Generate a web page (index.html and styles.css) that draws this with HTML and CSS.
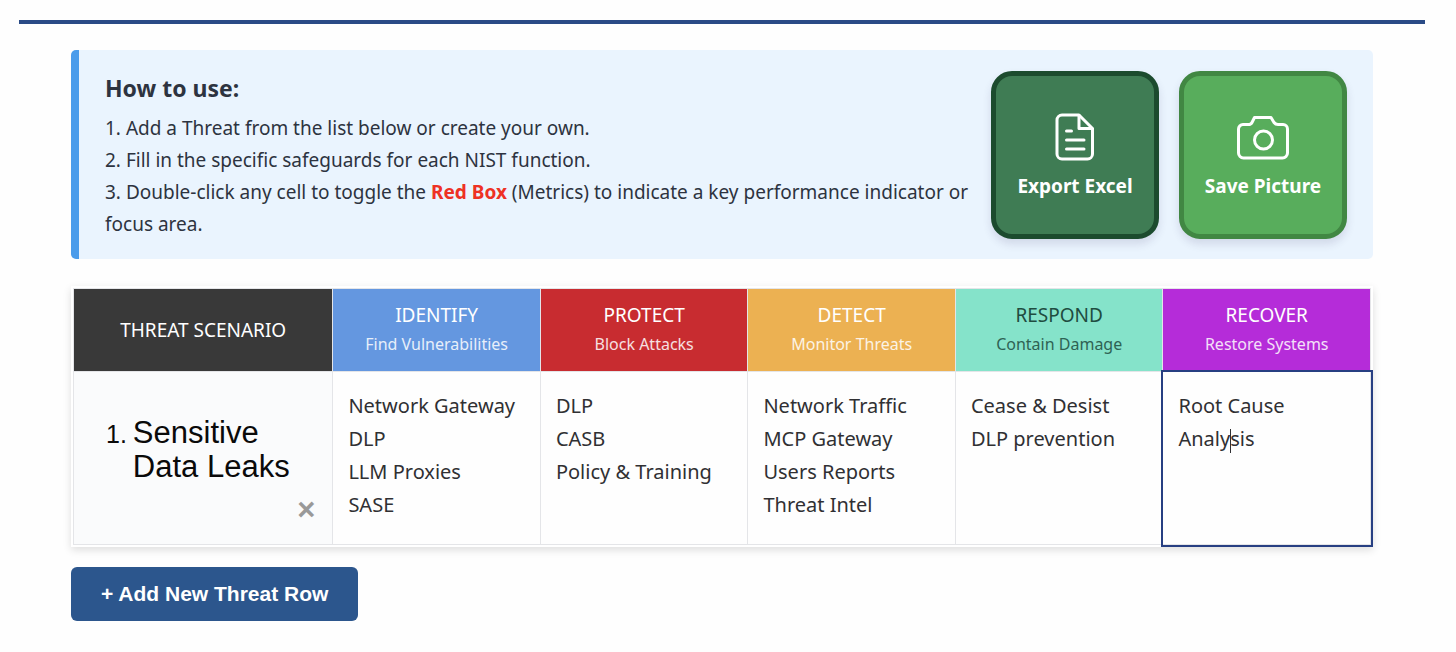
FILE: index.html
```html
<!DOCTYPE html>
<html lang="en">
<head>
<meta charset="utf-8">
<meta name="viewport" content="width=device-width, initial-scale=1">
<title>Threat Matrix</title>
<link rel="stylesheet" href="styles.css">
</head>
<body>
<header class="page-rule"></header>
<main class="content">
  <section class="guide">
    <div class="guide-text">
      <h2 class="guide-title">How to use:</h2>
      <p>1. Add a Threat from the list below or create your own.</p>
      <p>2. Fill in the specific safeguards for each NIST function.</p>
      <p>3. Double-click any cell to toggle the <strong class="red">Red Box</strong> (Metrics) to indicate a key performance indicator or focus area.</p>
    </div>
    <div class="actions">
      <button type="button" class="tile tile-excel">
        <svg class="icon" viewBox="0 0 52 52" aria-hidden="true">
          <path d="M13 4H30L43.500 17.500V43a5 5 0 0 1-5 5H13a5 5 0 0 1-5-5V9a5 5 0 0 1 5-5z"/>
          <path d="M30 4.500V17.500H43M17.500 20h5M17.500 29h17.500M17.500 38h17.500"/>
        </svg>
        <span>Export Excel</span>
      </button>
      <button type="button" class="tile tile-picture">
        <svg class="icon" viewBox="0 0 52 52" aria-hidden="true">
          <path d="M6 13.500H11.500Q14 13.500 15 11.500L17.500 6.500H34L37 11.500Q38.500 13.500 41 13.500H46a4.500 4.500 0 0 1 4.500 4.500V42a5 5 0 0 1-5 5H6.500a5 5 0 0 1-5-5V18a4.500 4.500 0 0 1 4.500-4.500z"/>
          <circle cx="26.500" cy="29" r="9"/>
        </svg>
        <span>Save Picture</span>
      </button>
    </div>
  </section>

  <div class="matrix-wrap">
    <table class="matrix">
      <thead>
        <tr>
          <th scope="col" class="scenario-head">THREAT SCENARIO</th>
          <th scope="col" class="identify">IDENTIFY<small>Find Vulnerabilities</small></th>
          <th scope="col" class="protect">PROTECT<small>Block Attacks</small></th>
          <th scope="col" class="detect">DETECT<small>Monitor Threats</small></th>
          <th scope="col" class="respond">RESPOND<small>Contain Damage</small></th>
          <th scope="col" class="recover">RECOVER<small>Restore Systems</small></th>
        </tr>
      </thead>
      <tbody>
        <tr>
          <th scope="row" class="scenario">
            <div class="scenario-name"><span class="number">1.</span><span>Sensitive<br>Data Leaks</span></div>
            <button type="button" class="remove" aria-label="Remove row">×</button>
          </th>
          <td contenteditable="true">Network Gateway<br>DLP<br>LLM Proxies<br>SASE</td>
          <td contenteditable="true">DLP<br>CASB<br>Policy &amp; Training</td>
          <td contenteditable="true">Network Traffic<br>MCP Gateway<br>Users Reports<br>Threat Intel</td>
          <td contenteditable="true">Cease &amp; Desist<br>DLP prevention</td>
          <td contenteditable="true" class="editing">Root Cause<br>Analy<span class="caret"></span>sis</td>
        </tr>
      </tbody>
    </table>
  </div>

  <button type="button" class="add-row">+ Add New Threat Row</button>
</main>
</body>
</html>
```
FILE: styles.css
```css
* {
  box-sizing: border-box;
}

body {
  margin: 0;
  padding: 20px 31px 32px 19px;
  background: #fefefe;
  color: #2d3340;
  font-family: Tahoma, "Noto Sans", sans-serif;
}

button {
  font: inherit;
  cursor: pointer;
}

.page-rule {
  height: 4px;
  background: #2a4b86;
}

.content {
  padding: 26px 52px 0;
}

.guide {
  display: flex;
  align-items: center;
  justify-content: space-between;
  gap: 20px;
  padding: 19px 26px;
  border-left: 8px solid #4a9ceb;
  border-radius: 5px;
  background: #eaf4fe;
}

.guide-text {
  flex: 1;
  font-size: 19px;
  line-height: 32px;
}

.guide-text p {
  margin: 0;
}

.guide-title {
  margin: 0 0 5px;
  font-size: 23px;
  line-height: 38px;
}

.red {
  color: #ee3124;
}

.actions {
  display: flex;
  gap: 20px;
}

.tile {
  display: flex;
  flex-direction: column;
  align-items: center;
  justify-content: center;
  gap: 10px;
  width: 168px;
  height: 168px;
  padding: 0;
  border: 5px solid;
  border-radius: 21px;
  color: #fff;
  font-size: 19px;
  font-weight: 700;
  box-shadow: 0 5px 8px rgba(60, 50, 100, 0.14);
}

.tile-excel {
  border-color: #1c4b2e;
  background: #3f7c54;
}

.tile-picture {
  border-color: #418743;
  background: #58ad5c;
}

.icon {
  width: 52px;
  height: 52px;
  fill: none;
  stroke: #fff;
  stroke-width: 3;
  stroke-linecap: round;
  stroke-linejoin: round;
}

.matrix-wrap {
  margin: 27px 0 20px;
  padding: 2px;
  background: #fff;
  box-shadow: 0 3px 8px rgba(0, 0, 0, 0.13);
}

.matrix {
  width: 100%;
  table-layout: fixed;
  border-collapse: collapse;
}

.matrix th,
.matrix td {
  border: 1px solid #e4e5e8;
}

.matrix thead th {
  width: 16%;
  height: 83px;
  padding: 0 8px;
  color: #fff;
  font-size: 19px;
  font-weight: 400;
  line-height: 27px;
}

.matrix small {
  display: block;
  margin-top: 2px;
  font-size: 16px;
  opacity: 0.85;
}

.matrix thead .scenario-head {
  width: 20%;
  background: #393939;
}

.matrix .identify {
  background: #6497e0;
}

.matrix .protect {
  background: #c82c30;
}

.matrix .detect {
  background: #ecb152;
}

.matrix thead .respond {
  background: #85e3ca;
  color: #204c40;
}

.matrix .recover {
  background: #b52cd9;
}

.matrix td {
  height: 173px;
  padding: 17px 8px 17px 15px;
  background: #fefefe;
  color: #303033;
  font-size: 20px;
  line-height: 33px;
  vertical-align: top;
}

.matrix .scenario {
  position: relative;
  padding: 0 8px 16px 32px;
  background: #fafbfc;
  color: #0a0a0a;
  font-family: "Liberation Sans", Arial, sans-serif;
  font-size: 31px;
  font-weight: 400;
  line-height: 34px;
  text-align: left;
}

.scenario-name {
  display: flex;
  align-items: baseline;
  gap: 6px;
}

.number {
  font-size: 25px;
}

.remove {
  position: absolute;
  right: 17px;
  bottom: 19px;
  padding: 0;
  border: 0;
  background: none;
  color: #999;
  font-size: 31px;
  font-weight: 700;
  line-height: 30px;
}

.matrix .editing {
  outline: 2px solid #273f82;
}

.caret {
  display: inline-block;
  width: 1px;
  height: 24px;
  margin-right: -1px;
  background: #303033;
  vertical-align: middle;
}

.add-row {
  display: block;
  padding: 15px 30px;
  border: 0;
  border-radius: 6px;
  background: #2c568d;
  color: #fff;
  font-family: "Liberation Sans", Arial, sans-serif;
  font-size: 21px;
  font-weight: 700;
  line-height: 24px;
}
```
